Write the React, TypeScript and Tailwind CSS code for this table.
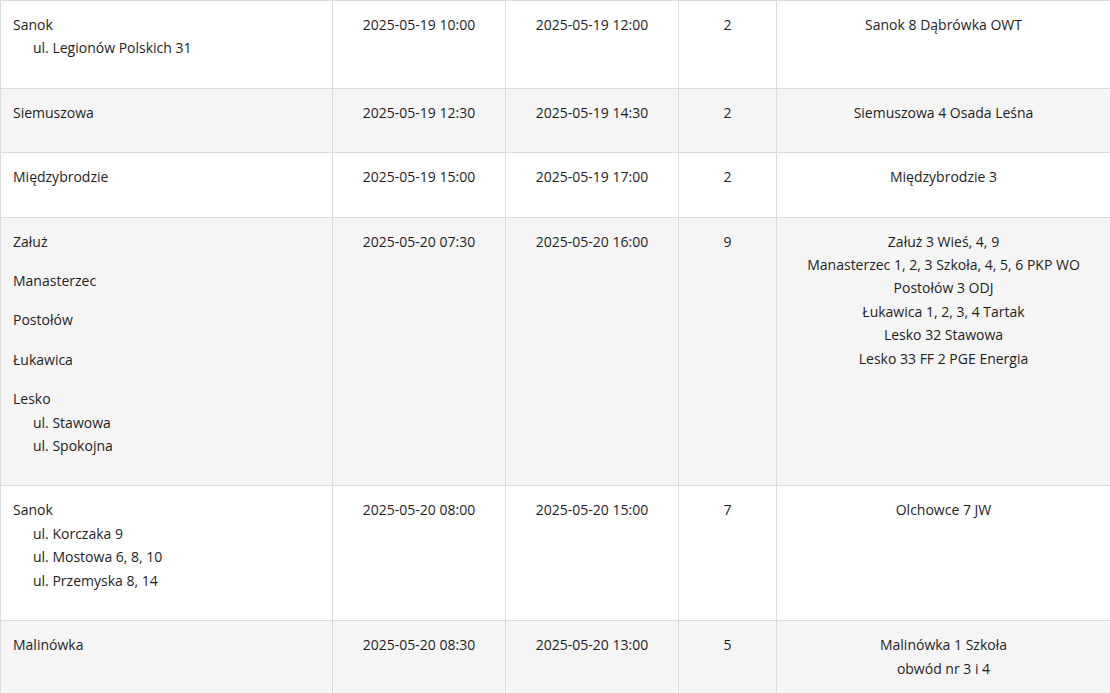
import React from "react";

type Row = {
  places: string[][];
  start: string;
  end: string;
  n: string;
  stations: string[];
};

const rows: Row[] = [
  {
    places: [["Sanok", "ul. Legionów Polskich 31"]],
    start: "2025-05-19 10:00",
    end: "2025-05-19 12:00",
    n: "2",
    stations: ["Sanok 8 Dąbrówka OWT"],
  },
  {
    places: [["Siemuszowa"]],
    start: "2025-05-19 12:30",
    end: "2025-05-19 14:30",
    n: "2",
    stations: ["Siemuszowa 4 Osada Leśna"],
  },
  {
    places: [["Międzybrodzie"]],
    start: "2025-05-19 15:00",
    end: "2025-05-19 17:00",
    n: "2",
    stations: ["Międzybrodzie 3"],
  },
  {
    places: [["Załuż"], ["Manasterzec"], ["Postołów"], ["Łukawica"], ["Lesko", "ul. Stawowa", "ul. Spokojna"]],
    start: "2025-05-20 07:30",
    end: "2025-05-20 16:00",
    n: "9",
    stations: [
      "Załuż 3 Wieś, 4, 9",
      "Manasterzec 1, 2, 3 Szkoła, 4, 5, 6 PKP WO",
      "Postołów 3 ODJ",
      "Łukawica 1, 2, 3, 4 Tartak",
      "Lesko 32 Stawowa",
      "Lesko 33 FF 2 PGE Energia",
    ],
  },
  {
    places: [["Sanok", "ul. Korczaka 9", "ul. Mostowa 6, 8, 10", "ul. Przemyska 8, 14"]],
    start: "2025-05-20 08:00",
    end: "2025-05-20 15:00",
    n: "7",
    stations: ["Olchowce 7 JW"],
  },
  {
    places: [["Malinówka"]],
    start: "2025-05-20 08:30",
    end: "2025-05-20 13:00",
    n: "5",
    stations: ["Malinówka 1 Szkoła", "obwód nr 3 i 4"],
  },
];

export default function App() {
  return (
    <div
      className="w-[1110px] h-[693px] overflow-hidden bg-white text-[#1e1e1e] text-[14px] leading-[23.4px]"
      style={{ fontFamily: '"Open Sans", "Noto Sans", sans-serif' }}
    >
      <table className="w-[1110px] table-fixed border-collapse">
        <colgroup>
          <col className="w-[332px]" />
          <col className="w-[173px]" />
          <col className="w-[173px]" />
          <col className="w-[98px]" />
          <col className="w-[334px]" />
        </colgroup>
        <tbody>
          {rows.map((r, i) => (
            <tr key={i} className={i % 2 === 1 ? "bg-[#f5f5f5]" : "bg-white"}>
              <td className="border border-[#dcdcdc] align-top px-3 pt-3 pb-3">
                {r.places.map((p, j) => (
                  <div key={j} className="mb-4">
                    {p.map((line, k) => (
                      <div key={k} className={k > 0 ? "pl-5" : ""}>
                        {line}
                      </div>
                    ))}
                  </div>
                ))}
              </td>
              <td className="border border-[#dcdcdc] align-top px-3 pt-3 pb-3 text-center">
                <div className="mb-4">{r.start}</div>
              </td>
              <td className="border border-[#dcdcdc] align-top px-3 pt-3 pb-3 text-center">
                <div className="mb-4">{r.end}</div>
              </td>
              <td className="border border-[#dcdcdc] align-top px-3 pt-3 pb-3 text-center">
                <div className="mb-4">{r.n}</div>
              </td>
              <td className="border border-[#dcdcdc] align-top px-3 pt-3 pb-3 text-center">
                <div className="mb-4">
                  {r.stations.map((s, k) => (
                    <div key={k}>{s}</div>
                  ))}
                </div>
              </td>
            </tr>
          ))}
        </tbody>
      </table>
    </div>
  );
}
